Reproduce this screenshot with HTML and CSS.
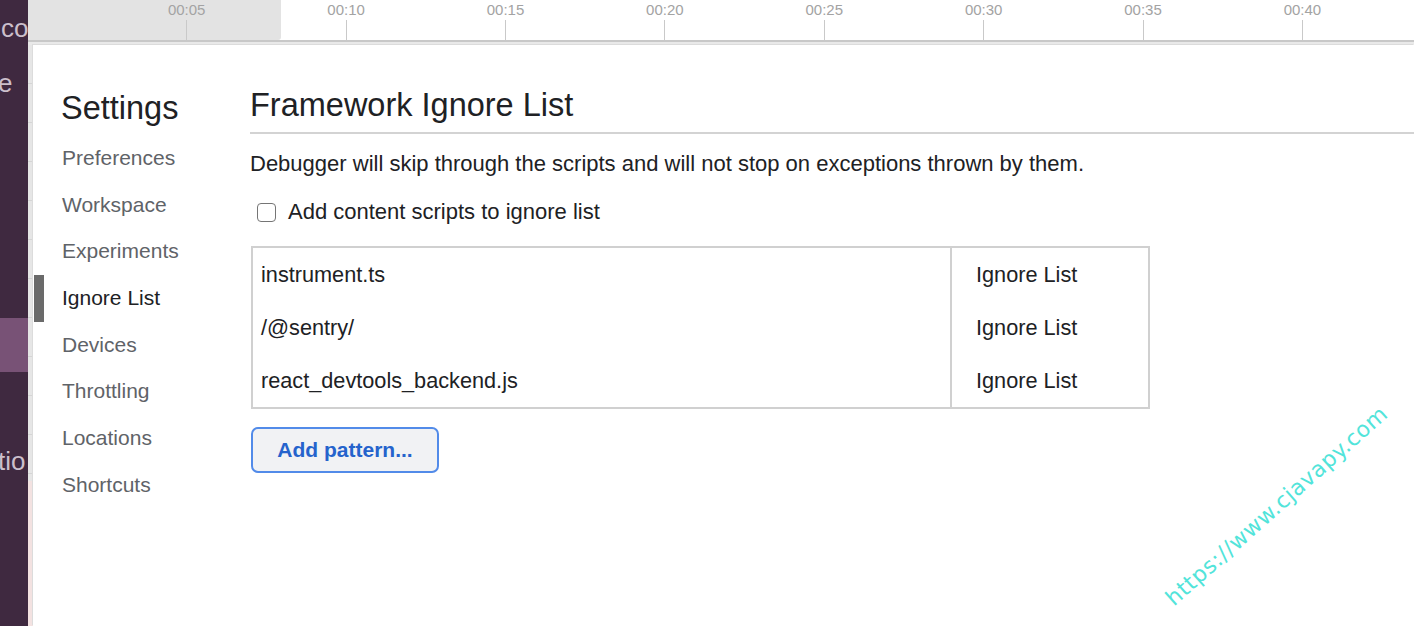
FILE: index.html
```html
<!DOCTYPE html>
<html lang="en">
<head>
<meta charset="utf-8">
<title>Settings - Ignore List</title>
<link rel="stylesheet" href="styles.css">
</head>
<body>
<div class="app">
  <div class="rail">
    <div class="rail-text rail-co">co</div>
    <div class="rail-text rail-e">e</div>
    <div class="rail-hl"></div>
    <div class="rail-text rail-tio">tio</div>
  </div>
  <div class="right">
    <div class="timeline">
      <div class="overview"></div>
      <div class="ticks">
        <div class="tick"><span class="tick-label">00:05</span><span class="tick-line"></span></div>
        <div class="tick"><span class="tick-label">00:10</span><span class="tick-line"></span></div>
        <div class="tick"><span class="tick-label">00:15</span><span class="tick-line"></span></div>
        <div class="tick"><span class="tick-label">00:20</span><span class="tick-line"></span></div>
        <div class="tick"><span class="tick-label">00:25</span><span class="tick-line"></span></div>
        <div class="tick"><span class="tick-label">00:30</span><span class="tick-line"></span></div>
        <div class="tick"><span class="tick-label">00:35</span><span class="tick-line"></span></div>
        <div class="tick"><span class="tick-label">00:40</span><span class="tick-line"></span></div>
      </div>
    </div>
    <div class="sep"></div>
    <div class="stage">
      <div class="gutter"></div>
      <div class="dialog">
        <nav class="nav">
          <div class="nav-title">Settings</div>
          <div class="nav-item">Preferences</div>
          <div class="nav-item">Workspace</div>
          <div class="nav-item">Experiments</div>
          <div class="nav-item selected">Ignore List</div>
          <div class="nav-item">Devices</div>
          <div class="nav-item">Throttling</div>
          <div class="nav-item">Locations</div>
          <div class="nav-item">Shortcuts</div>
        </nav>
        <main class="main">
          <h1 class="heading">Framework Ignore List</h1>
          <p class="desc">Debugger will skip through the scripts and will not stop on exceptions thrown by them.</p>
          <label class="check-row"><span class="checkbox"></span><span>Add content scripts to ignore list</span></label>
          <div class="table">
            <div class="row"><div class="cell pattern">instrument.ts</div><div class="cell action">Ignore List</div></div>
            <div class="row"><div class="cell pattern">/@sentry/</div><div class="cell action">Ignore List</div></div>
            <div class="row"><div class="cell pattern">react_devtools_backend.js</div><div class="cell action">Ignore List</div></div>
          </div>
          <button class="add-btn">Add pattern...</button>
        </main>
      </div>
    </div>
  </div>
  <div class="watermark">https://www.cjavapy.com</div>
</div>
</body>
</html>
```
FILE: styles.css
```css
* { box-sizing: border-box; }
html, body {
  margin: 0;
  padding: 0;
  width: 1414px;
  height: 626px;
  overflow: hidden;
  background: #fff;
  font-family: "Liberation Sans", Arial, Helvetica, sans-serif;
  color: #202124;
}
.app {
  display: flex;
  width: 1414px;
  height: 626px;
  position: relative;
}
.rail {
  width: 28px;
  flex: none;
  background: #3f2940;
  display: flex;
  flex-direction: column;
  overflow: hidden;
}
.rail-text {
  color: #cbbfcb;
  font-size: 26px;
  line-height: 30px;
  white-space: nowrap;
}
.rail-co { margin-top: 13px; margin-left: 1px; }
.rail-e { margin-top: 25px; margin-left: -2px; }
.rail-hl {
  margin-top: 220px;
  height: 54px;
  background: #785276;
}
.rail-tio { margin-top: 74px; margin-left: -2px; }

.right {
  flex: 1;
  display: flex;
  flex-direction: column;
  min-width: 0;
}
.timeline {
  height: 40px;
  position: relative;
  flex: none;
}
.overview {
  position: absolute;
  left: 0;
  top: 0;
  width: 253px;
  height: 40px;
  background: #e3e3e3;
  border-bottom-right-radius: 3px;
}
.ticks {
  position: relative;
  display: flex;
  padding-left: 79px;
  height: 40px;
}
.tick {
  width: 159.4px;
  flex: none;
  display: flex;
  flex-direction: column;
  align-items: center;
}
.tick-label {
  font-size: 15px;
  line-height: 20px;
  color: #a3a3a3;
}
.tick-line {
  width: 1px;
  height: 20px;
  background: #c9c9c9;
}
.sep {
  height: 2px;
  background: #c8c8c8;
  flex: none;
}
.stage {
  flex: 1;
  display: flex;
  background: #e9e9e9;
  padding-top: 3px;
}
.gutter {
  width: 5px;
  flex: none;
  background:
    linear-gradient(#f3e2e1, #f3e2e1) 0 436px / 5px 200px no-repeat,
    repeating-linear-gradient(#e6e6e6 0 38px, #d5d5d5 38px 39px);
}
.dialog {
  flex: 1;
  background: #fff;
  display: flex;
  box-shadow: -1px -1px 0 #dcdcdc;
}
.nav {
  width: 217px;
  flex: none;
  display: flex;
  flex-direction: column;
  padding-top: 43px;
}
.nav-title {
  font-size: 32.5px;
  line-height: 40px;
  padding-left: 28px;
  margin-bottom: 7px;
  color: #202124;
}
.nav-item {
  height: 46.7px;
  line-height: 46.7px;
  font-size: 21px;
  color: #5f6368;
  border-left: 10px solid transparent;
  margin-left: 1px;
  padding-left: 18px;
}
.nav-item.selected {
  color: #202124;
  border-left-color: #6a6a6a;
}
.main {
  flex: 1;
  display: flex;
  flex-direction: column;
  align-items: flex-start;
  padding-top: 39px;
}
.heading {
  margin: 0;
  font-weight: normal;
  font-size: 32.5px;
  line-height: 42px;
  padding-bottom: 6px;
  border-bottom: 2px solid #d3d3d3;
  align-self: stretch;
}
.desc {
  margin: 16px 0 0 0;
  font-size: 22px;
  line-height: 28px;
}
.check-row {
  display: flex;
  align-items: center;
  gap: 12px;
  margin: 20px 0 0 7px;
  font-size: 22px;
  line-height: 28px;
}
.checkbox {
  width: 19px;
  height: 19px;
  border: 1.5px solid #757575;
  border-radius: 4px;
  background: #fff;
}
.table {
  margin: 20px 0 0 1px;
  width: 899px;
  border: 2px solid #d0d0d0;
  display: flex;
  flex-direction: column;
}
.row {
  display: flex;
  height: 53px;
}
.cell {
  font-size: 21.7px;
  line-height: 53px;
}
.pattern {
  width: 699px;
  padding-left: 8px;
  border-right: 2px solid #d0d0d0;
}
.action {
  flex: 1;
  padding-left: 24px;
}
.add-btn {
  margin: 18px 0 0 1px;
  width: 188px;
  height: 46px;
  border: 2.5px solid #528be9;
  border-radius: 7px;
  background: #f1f2f4;
  color: #2563cc;
  font-family: "Liberation Sans", Arial, Helvetica, sans-serif;
  font-size: 21px;
  font-weight: bold;
  padding: 0;
}
.watermark {
  position: absolute;
  left: 1127px;
  top: 491px;
  width: 300px;
  text-align: center;
  font-family: "DejaVu Sans", sans-serif;
  font-size: 22px;
  line-height: 30px;
  color: #52e4da;
  transform: rotate(-41.6deg);
  white-space: nowrap;
  letter-spacing: 0.6px;
}
```
